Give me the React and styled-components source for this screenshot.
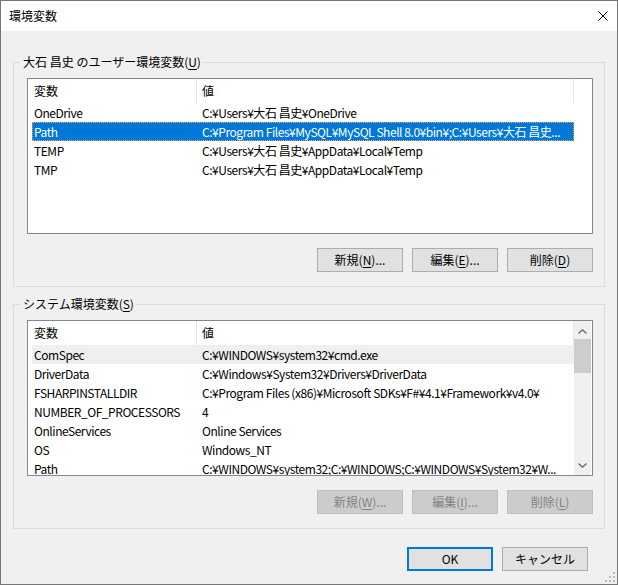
import React from 'react'
import styled, { createGlobalStyle } from 'styled-components'

const userVars = [
  { name: 'OneDrive', value: 'C:¥Users¥大石 昌史¥OneDrive' },
  { name: 'Path', value: 'C:¥Program Files¥MySQL¥MySQL Shell 8.0¥bin¥;C:¥Users¥大石 昌史...', selected: true },
  { name: 'TEMP', value: 'C:¥Users¥大石 昌史¥AppData¥Local¥Temp' },
  { name: 'TMP', value: 'C:¥Users¥大石 昌史¥AppData¥Local¥Temp' },
]

const systemVars = [
  { name: 'ComSpec', value: 'C:¥WINDOWS¥system32¥cmd.exe', hot: true },
  { name: 'DriverData', value: 'C:¥Windows¥System32¥Drivers¥DriverData' },
  { name: 'FSHARPINSTALLDIR', value: 'C:¥Program Files (x86)¥Microsoft SDKs¥F#¥4.1¥Framework¥v4.0¥' },
  { name: 'NUMBER_OF_PROCESSORS', value: '4' },
  { name: 'OnlineServices', value: 'Online Services' },
  { name: 'OS', value: 'Windows_NT' },
  { name: 'Path', value: 'C:¥WINDOWS¥system32;C:¥WINDOWS;C:¥WINDOWS¥System32¥W...' },
]

function App() {
  return (
    <>
      <GlobalStyle />
      <Window>
        <TitleBar>
          <Title>環境変数</Title>
          <CloseIcon viewBox='0 0 10 10'>
            <path d='M0.5 0.5 L9.5 9.5 M9.5 0.5 L0.5 9.5' />
          </CloseIcon>
        </TitleBar>
        <Body>
          <Group>
            <Legend>大石 昌史 のユーザー環境変数(<u>U</u>)</Legend>
            <ListView>
              <ListInner>
                <Header />
                {userVars.map((v) => (
                  <Row key={v.name} selected={v.selected}>
                    <Cell>{v.name}</Cell>
                    <Cell>{v.value}</Cell>
                  </Row>
                ))}
              </ListInner>
            </ListView>
            <ButtonRow>
              <Button>新規(<u>N</u>)...</Button>
              <Button>編集(<u>E</u>)...</Button>
              <Button>削除(<u>D</u>)</Button>
            </ButtonRow>
          </Group>
          <Group $second>
            <Legend>システム環境変数(<u>S</u>)</Legend>
            <ListView>
              <ListInner>
                <Header />
                {systemVars.map((v) => (
                  <Row key={v.name} $hot={v.hot}>
                    <Cell>{v.name}</Cell>
                    <Cell>{v.value}</Cell>
                  </Row>
                ))}
              </ListInner>
              <ScrollBar>
                <Arrow viewBox='0 0 9 5'>
                  <path d='M0.5 4.5 L4.5 0.8 L8.5 4.5' />
                </Arrow>
                <Track>
                  <Thumb />
                </Track>
                <Arrow viewBox='0 0 9 5'>
                  <path d='M0.5 0.5 L4.5 4.2 L8.5 0.5' />
                </Arrow>
              </ScrollBar>
            </ListView>
            <ButtonRow>
              <Button disabled>新規(<u>W</u>)...</Button>
              <Button disabled>編集(<u>I</u>)...</Button>
              <Button disabled>削除(<u>L</u>)</Button>
            </ButtonRow>
          </Group>
          <Footer>
            <Button $default>OK</Button>
            <Button>キャンセル</Button>
          </Footer>
        </Body>
        <Grip viewBox='0 0 10 10'>
          <rect x='8' y='0' width='2' height='2' />
          <rect x='4' y='4' width='2' height='2' />
          <rect x='8' y='4' width='2' height='2' />
          <rect x='0' y='8' width='2' height='2' />
          <rect x='4' y='8' width='2' height='2' />
          <rect x='8' y='8' width='2' height='2' />
        </Grip>
      </Window>
    </>
  )
}

function Header() {
  return (
    <HeaderRow>
      <HeaderCell>変数</HeaderCell>
      <HeaderCell $value>値</HeaderCell>
    </HeaderRow>
  )
}

const GlobalStyle = createGlobalStyle`
  body{
    margin:0;
    background:#f0f0f0;
    font-family:"Noto Sans CJK JP","Noto Sans",sans-serif;
    font-size:12px;
    color:#000;
  }
`

const Window = styled.div`
  position:relative;
  width:618px;
  height:585px;
  box-sizing:border-box;
  border:1px solid #777;
  background:#f0f0f0;
  display:flex;
  flex-direction:column;
`

const TitleBar = styled.div`
  height:30px;
  background:#fff;
  display:flex;
  align-items:center;
  justify-content:space-between;
  padding:0 9px 0 8px;
`

const Title = styled.span`
  font-size:12px;
  line-height:16px;
`

const CloseIcon = styled.svg`
  width:10px;
  height:10px;
  fill:none;
  stroke:#000;
  stroke-width:1;
`

const Body = styled.div`
  flex:1;
  display:flex;
  flex-direction:column;
  padding:23px 12px 0 12px;
`

const Group = styled.fieldset`
  margin:${(p) => (p.$second ? '9px 0 0' : '0')};
  width:592px;
  box-sizing:border-box;
  min-width:0;
  border:1px solid #dcdcdc;
  padding:8px 11px 14px 13px;
`

const Legend = styled.legend`
  padding:0 2px;
  margin-left:-6px;
  line-height:16px;
  font-size:12px;
  u{ text-underline-offset:2px; }
`

const ListView = styled.div`
  height:156px;
  box-sizing:border-box;
  border:1px solid #828790;
  background:#fff;
  display:flex;
  overflow:hidden;
`

const ListInner = styled.div`
  flex:1;
  min-width:0;
  padding-left:4px;
`

const HeaderRow = styled.div`
  display:grid;
  grid-template-columns:165px 377px;
  height:24px;
`

const HeaderCell = styled.div`
  border-right:1px solid #e5e5e5;
  padding-left:${(p) => (p.$value ? '5px' : '2px')};
  line-height:24px;
  margin-bottom:1px;
`

const Row = styled.div`
  display:grid;
  grid-template-columns:168px 374px;
  width:542px;
  height:19px;
  box-sizing:border-box;
  line-height:17px;
  background:${(p) => (p.selected ? '#0078d7' : p.$hot ? '#efefef' : 'transparent')};
  color:${(p) => (p.selected ? '#fff' : '#000')};
  border:1px ${(p) => (p.selected ? 'dotted #f5a25a' : 'solid transparent')};
`

const Cell = styled.div`
  padding-left:1px;
  white-space:nowrap;
  overflow:hidden;
  letter-spacing:-0.45px;
`

const ScrollBar = styled.div`
  width:17px;
  margin-right:1px;
  background:#f0f0f0;
  display:flex;
  flex-direction:column;
  align-items:center;
`

const Arrow = styled.svg`
  width:9px;
  height:5px;
  margin:8px 0 5px;
  fill:none;
  stroke:#606060;
  stroke-width:1.2;
  &:last-child{ margin:auto 0 7px; }
`

const Track = styled.div`
  width:100%;
`

const Thumb = styled.div`
  height:34px;
  background:#cdcdcd;
`

const ButtonRow = styled.div`
  display:flex;
  justify-content:flex-end;
  gap:9px;
  margin-top:14px;
`

const Button = styled.button`
  width:86px;
  height:24px;
  box-sizing:border-box;
  margin:0;
  padding:0;
  font-family:inherit;
  font-size:12px;
  line-height:16px;
  background:${(p) => (p.disabled ? '#cccccc' : '#e1e1e1')};
  border:${(p) => (p.$default ? '2px solid #0078d7' : p.disabled ? '1px solid #bfbfbf' : '1px solid #adadad')};
  color:${(p) => (p.disabled ? '#838383' : '#000')};
  u{ text-underline-offset:2px; }
`

const Footer = styled.div`
  display:flex;
  justify-content:flex-end;
  gap:9px;
  margin-top:18px;
  padding-right:17px;
`

const Grip = styled.svg`
  position:absolute;
  right:2px;
  bottom:2px;
  width:10px;
  height:10px;
  fill:#bcbcbc;
`

export default App
